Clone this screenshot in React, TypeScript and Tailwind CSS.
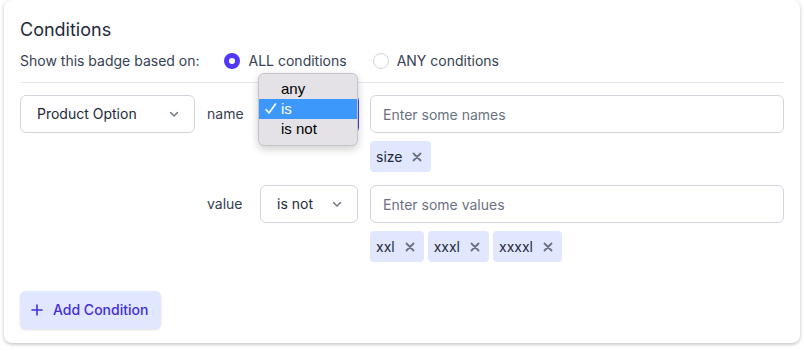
import { useState } from "react"

function Chevron() {
  return (
    <svg width="12" height="12" viewBox="0 0 12 12" fill="none" className="text-gray-500">
      <path d="M2.5 4.5L6 8l3.5-3.5" stroke="currentColor" strokeWidth="1.4" strokeLinecap="round" strokeLinejoin="round" />
    </svg>
  )
}

function Tag({ label }: { label: string }) {
  return (
    <span className="flex h-[31px] items-center rounded bg-[#e0e7ff] pl-[6px] pr-[9px] text-sm text-gray-800">
      {label}
      <svg width="10" height="10" viewBox="0 0 10 10" className="ml-[10px] text-gray-500">
        <path d="M1.5 1.5l7 7M8.5 1.5l-7 7" stroke="currentColor" strokeWidth="1.8" strokeLinecap="round" />
      </svg>
    </span>
  )
}

function FakeSelect({ value, width, focused }: { value: string; width: string; focused?: boolean }) {
  return (
    <div
      className={
        "flex h-[38px] shrink-0 items-center justify-between rounded-md border bg-white pl-4 pr-[14px] text-sm text-gray-800 " +
        width +
        (focused ? " border-indigo-600 ring-1 ring-indigo-600" : " border-gray-300")
      }
    >
      <span>{value}</span>
      <Chevron />
    </div>
  )
}

export default function App() {
  const [mode, setMode] = useState("all")

  return (
    <div className="h-[351px] w-[804px] bg-white font-['Inter',sans-serif]">
      <div className="ml-1 w-[796px] rounded-lg bg-white px-4 pb-[14px] pt-4 shadow-[0_1px_4px_rgba(0,0,0,0.18),0_2px_3px_rgba(0,0,0,0.08)]">
        <h2 className="text-lg leading-7 text-gray-800">Conditions</h2>

        <div className="mt-[7px] flex h-5 items-center text-sm text-gray-700">
          <span>Show this badge based on:</span>
          <label className="ml-6 flex items-center gap-[9px]" onClick={() => setMode("all")}>
            <span
              className={
                "h-4 w-4 rounded-full " +
                (mode === "all" ? "border-[5px] border-indigo-600 bg-white" : "border border-gray-300 bg-white")
              }
            />
            ALL conditions
          </label>
          <label className="ml-[26px] flex items-center gap-2" onClick={() => setMode("any")}>
            <span
              className={
                "h-4 w-4 rounded-full " +
                (mode === "any" ? "border-[5px] border-indigo-600 bg-white" : "border border-gray-300 bg-white")
              }
            />
            ANY conditions
          </label>
        </div>

        <div className="mt-[11px] border-t border-gray-200 pt-3">
          <div className="flex gap-3">
            <FakeSelect value="Product Option" width="w-[175px]" />

            <div className="flex flex-1 flex-col gap-[13px]">
              <div className="flex gap-3">
                <span className="flex h-[38px] w-[41px] items-center text-sm text-gray-700">name</span>
                <div className="relative">
                  <FakeSelect value="" width="w-[98px]" focused />
                  <div className="absolute left-[-2px] top-[-22px] w-[100px] rounded-md border border-[#c6c4c9] bg-[#e4e2e6] pb-[6px] pt-[5px] font-['Liberation_Sans',sans-serif] text-[15px] text-black shadow-[0_3px_8px_rgba(0,0,0,0.2)]">
                    <div className="flex h-5 items-center pl-[22px]">any</div>
                    <div className="flex h-5 items-center bg-[#3d98fb] text-white">
                      <svg width="22" height="12" viewBox="0 0 22 12" fill="none">
                        <path d="M7 6.5l3 3.5L16.5 1" stroke="currentColor" strokeWidth="1.6" strokeLinecap="round" strokeLinejoin="round" />
                      </svg>
                      <span>is</span>
                    </div>
                    <div className="flex h-5 items-center pl-[22px]">is not</div>
                  </div>
                </div>
                <div className="flex flex-1 flex-col gap-2">
                  <input
                    placeholder="Enter some names"
                    className="h-[38px] w-full rounded-md border border-gray-300 bg-white px-3 text-sm text-gray-800 outline-none placeholder:text-gray-500"
                  />
                  <div className="flex gap-1">
                    <Tag label="size" />
                  </div>
                </div>
              </div>

              <div className="flex gap-3">
                <span className="flex h-[38px] w-[41px] items-center text-sm text-gray-700">value</span>
                <FakeSelect value="is not" width="w-[98px]" />
                <div className="flex flex-1 flex-col gap-2">
                  <input
                    placeholder="Enter some values"
                    className="h-[38px] w-full rounded-md border border-gray-300 bg-white px-3 text-sm text-gray-800 outline-none placeholder:text-gray-500"
                  />
                  <div className="flex gap-1">
                    <Tag label="xxl" />
                    <Tag label="xxxl" />
                    <Tag label="xxxxl" />
                  </div>
                </div>
              </div>
            </div>
          </div>

          <button className="mt-[29px] flex h-[38px] items-center gap-[10px] rounded-md bg-[#e0e7ff] pl-[11px] pr-[13px] text-sm font-medium text-indigo-700 shadow-sm">
            <svg width="12" height="12" viewBox="0 0 12 12">
              <path d="M6 1v10M1 6h10" stroke="currentColor" strokeWidth="1.6" strokeLinecap="round" />
            </svg>
            Add Condition
          </button>
        </div>
      </div>
    </div>
  )
}
